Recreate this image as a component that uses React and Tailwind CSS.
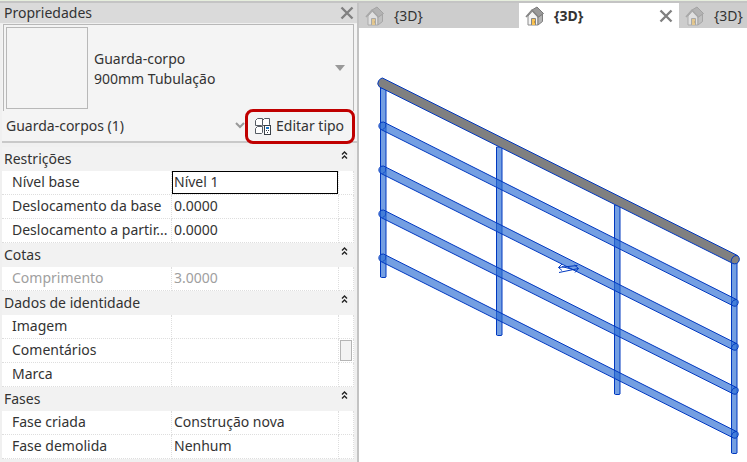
import React, { useState } from "react";

const groups = [
  {
    title: "Restrições",
    rows: [
      { label: "Nível base", value: "Nível 1", selected: true },
      { label: "Deslocamento da base", value: "0.0000" },
      { label: "Deslocamento a partir...", value: "0.0000" },
    ],
  },
  {
    title: "Cotas",
    rows: [{ label: "Comprimento", value: "3.0000", disabled: true }],
  },
  {
    title: "Dados de identidade",
    rows: [
      { label: "Imagem", value: "" },
      { label: "Comentários", value: "", picker: true },
      { label: "Marca", value: "" },
    ],
  },
  {
    title: "Fases",
    rows: [
      { label: "Fase criada", value: "Construção nova" },
      { label: "Fase demolida", value: "Nenhum" },
    ],
  },
];

const CloseIcon = () => (
  <svg width="14" height="14" viewBox="0 0 14 14" fill="none" stroke="#808080" strokeWidth="2.4">
    <path d="M1.5 1.5l11 11M12.5 1.5l-11 11" />
  </svg>
);

const HouseIcon = ({ dim }) => (
  <svg width="20" height="20" viewBox="0 0 20 20" className={dim ? "opacity-50" : ""}>
    <path d="M3 10l4.500-5 5.500 6v8H3z" fill="#f4f4f4" stroke="#8c8c8c" />
    <path d="M13 11l4.500-3v7.500L13 19z" fill="#b4b4b4" stroke="#808080" />
    <path d="M7 4l5-3 6.500 6.500-5 3.500z" fill="#9a9a9a" stroke="#7a7a7a" />
    <path d="M1 11l6-6.700 6.500 7" fill="none" stroke="#858585" strokeWidth="1.600" />
    <path d="M6.500 19v-6.500h4V19" fill="#f9c353" stroke="#858585" />
    <path d="M9 16h1" stroke="#b06f10" />
  </svg>
);

const EditTypeIcon = () => (
  <svg width="17" height="17" viewBox="0 0 17 17" fill="none" stroke="#555b63">
    <path d="M2.500.5h5v6l-1 1h-6v-5zM9.500.5h5v6l-1 1h-6v-5zM2.500 8.500h5v6l-1 1h-6v-5z" fill="#fff" strokeLinejoin="round" />
    <rect x="9.500" y="7.500" width="6" height="9" fill="#fff" stroke="#3b4148" />
    <path d="M11 10h3" stroke="#1976c5" strokeWidth="2" />
    <path d="M11 12.500h1M13 12.500h1M12 14.500h1" stroke="#3b4148" />
  </svg>
);

const CollapseIcon = () => (
  <svg width="7" height="8" viewBox="0 0 7 8" fill="none" stroke="#222" strokeWidth="1.400">
    <path d="M1 3.500L3.500 1 6 3.500M1 7.500L3.500 5 6 7.500" />
  </svg>
);

const PropertyRow = ({ row, id }) => {
  const tone = row.disabled ? "text-[#a0a0a0]" : "text-[#333]";
  return (
    <tr className="h-6 bg-white">
      <th scope="row" className="border-r border-b border-dotted border-[#dedede] p-0 pb-0.5 pl-2.5 text-left font-normal whitespace-nowrap">
        <label htmlFor={id} className={`block leading-5 ${tone}`}>{row.label}</label>
      </th>
      <td className="border-r border-b border-dotted border-[#dedede] p-0">
        <input
          id={id}
          type="text"
          defaultValue={row.value}
          disabled={row.disabled}
          className={`block h-[23px] w-full border px-px pb-0.5 leading-5 outline-none ${tone} ${
            row.selected ? "border-black" : "border-transparent"
          }`}
        />
      </td>
      <td className="border-r border-b border-dotted border-[#dedede] p-0">
        {row.picker && (
          <button aria-label="Editar comentários" className="mx-auto block h-[21px] w-3 border border-[#b5b5b5] bg-[#f3f3f3]" />
        )}
      </td>
    </tr>
  );
};

const PropertyGroup = ({ group, index }) => {
  const [open, setOpen] = useState(true);
  return (
    <tbody>
      <tr className="h-6 bg-[#f2f2f2]">
        <th colSpan={2} className="p-0 pl-0.5 text-left leading-5 font-normal">{group.title}</th>
        <td className="p-0">
          <button aria-label={group.title} aria-expanded={open} onClick={() => setOpen(!open)} className="flex h-6 w-full justify-center pt-1 pr-1">
            <CollapseIcon />
          </button>
        </td>
      </tr>
      {open && group.rows.map((row, i) => <PropertyRow key={row.label} row={row} id={`prop-${index}-${i}`} />)}
    </tbody>
  );
};

const PropertiesPanel = () => (
  <aside className="flex w-[359px] shrink-0 flex-col border-r-2 border-[#c3c3c3] bg-[#f0f0f0]">
    <header className="flex h-5 items-center justify-between bg-[#dadada] pr-[3px] pl-1">
      <h1>Propriedades</h1>
      <button aria-label="Fechar" className="block"><CloseIcon /></button>
    </header>

    <div className="mt-px ml-0.5 bg-[#f4f4f4]">
      <button className="ml-px flex w-[351px] items-center border-t border-r border-l border-[#b8b8b8] p-0.5 text-left">
        <span className="h-[82px] w-[82px] shrink-0 border border-[#b8b8b8]" />
        <span className="ml-1.5 grow pt-0.5 leading-5">
          Guarda-corpo
          <br />
          900mm Tubulação
        </span>
        <svg width="10" height="6" viewBox="0 0 10 6" className="mr-1.5">
          <path d="M0 0h10L5 6z" fill="#999" />
        </svg>
      </button>

      <div className="flex h-8 items-center border-b-2 border-[#c9c9c9] pr-0.5">
        <div className="relative grow">
          <select aria-label="Filtro de propriedades" className="block w-full appearance-none pl-1 leading-5 outline-none">
            <option>Guarda-corpos (1)</option>
          </select>
          <svg width="10" height="7" viewBox="0 0 10 7" fill="none" stroke="#999" strokeWidth="2" className="pointer-events-none absolute top-1.5 right-0">
            <path d="M1 1l4 4 4-4" />
          </svg>
        </div>
        <button className="relative flex h-[35px] w-[110px] shrink-0 items-center gap-1 rounded-lg border-3 border-[#c00000] bg-[#f4f4f4] pl-[7px] whitespace-nowrap">
          <EditTypeIcon />
          Editar tipo
        </button>
      </div>
    </div>

    <table className="mt-1 ml-0.5 w-[352px] table-fixed border-separate border-spacing-0">
      <colgroup>
        <col className="w-[170px]" />
        <col />
        <col className="w-[15px]" />
      </colgroup>
      {groups.map((group, i) => <PropertyGroup key={group.title} group={group} index={i} />)}
    </table>
  </aside>
);

const ViewTab = ({ active }) => (
  <div className={`flex h-[25px] w-40 shrink-0 items-center px-1.5 ${active ? "bg-white" : "bg-[#cdcdcd]"}`}>
    <button role="tab" aria-selected={!!active} className={`flex grow items-center gap-[9px] ${active ? "font-bold" : ""}`}>
      <HouseIcon dim={!active} />
      {"{3D}"}
    </button>
    {active && <button aria-label="Fechar vista" className="block"><CloseIcon /></button>}
  </div>
);

const posts = [
  { x: 21.5, top: 60, bottom: 249 },
  { x: 137.5, top: 119, bottom: 307 },
  { x: 255.5, top: 177, bottom: 366 },
  { x: 372.5, top: 234, bottom: 425 },
];
const rails = [98, 142, 186, 230];

const Railing = () => (
  <svg viewBox="0 0 388 434" className="block w-full" role="img" aria-label="Guarda-corpo">
    <g fill="#2c6ed3" fillOpacity="0.66" stroke="#0038c0">
      {posts.map((p) => (
        <path key={p.x} d={`M${p.x} ${p.top}h5.500V${p.bottom}l-1 .5h-3.500l-1-.5z`} />
      ))}
      {rails.map((y) => (
        <g key={y}>
          <path d={`M24.500 ${y - 4}L376.500 ${y + 173}a3.500 3.500 0 0 1-2 7L22 ${y + 3.5}a4 4 0 0 1 2.500-7.500z`} />
          <path d={`M26.500 ${y - 2}q1 4-3 5.500`} fill="none" strokeOpacity="0.6" />
          <path d={`M377 ${y + 173.5}q-5 1-4.500 6`} fill="none" />
        </g>
      ))}
    </g>
    <g stroke="#0038c0" fill="#808080">
      <path d="M23.500 50L377.500 227a4.500 4.500 0 0 1-3.500 8.500L20.500 59q-3-3-1-6 2-3 4-3z" />
      <path d="M378 227.500q-5.500 0-6 6.500" fill="none" />
    </g>
    {/* flip arrows */}
    <g stroke="#0038c0" fill="none">
      <path d="M199.500 239.500l19-2M199.500 239.500l3.500-3.500M199.500 239.500l3.500 3M203 238.500l12.500 3.500M200 244.500l19.500-4M219.500 240.500l-4-3.500M219.500 240.500l-3.500 4" />
    </g>
  </svg>
);

const App = () => (
  <div className="flex min-h-screen flex-col overflow-hidden border-t border-[#e6eedd] bg-white font-['Noto_Sans',sans-serif] text-sm text-[#333]">
    <div className="h-0.5 bg-[#c4c4c4]" />
    <div className="flex grow">
      <PropertiesPanel />
      <main className="min-w-0 grow">
        <div role="tablist" className="flex overflow-hidden bg-[#cdcdcd]">
          <ViewTab />
          <ViewTab active />
          <ViewTab />
        </div>
        <Railing />
      </main>
    </div>
  </div>
);

export default App;
